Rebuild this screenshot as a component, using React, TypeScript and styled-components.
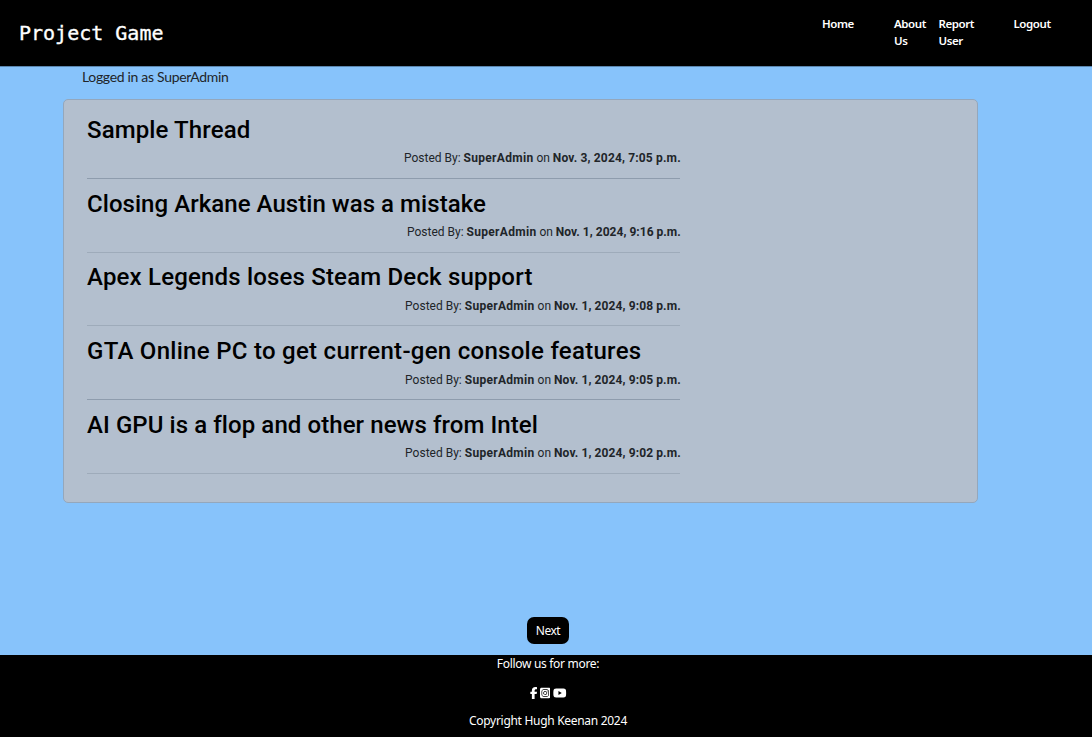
import React from "react";
import styled, { createGlobalStyle } from "styled-components";
import { FaFacebookF, FaSquareInstagram, FaYoutube } from "react-icons/fa6";

const GlobalStyle = createGlobalStyle`
  *, *::before, *::after { box-sizing: border-box; }
  body {
    margin: 0;
    background: #87c3fb;
    color: #212529;
    font-family: "Noto Sans", sans-serif;
  }
  h2, p, ul { margin: 0; padding: 0; }
`;

const Page = styled.div`
  display: flex;
  flex-direction: column;
  height: 737px;
`;

const Header = styled.header`
  display: flex;
  justify-content: space-between;
  flex: 0 0 67px;
  padding: 0 0 0 19px;
  background: #000;
  border-bottom: 1px solid #5b86ae;
  color: #fff;
`;

const Brand = styled.a`
  padding-top: 21px;
  font: 400 20px/24px "DejaVu Sans Mono", monospace;
  -webkit-text-stroke: 0.35px #fff;
  white-space: nowrap;
`;

const Nav = styled.ul`
  display: grid;
  grid-template-columns: 72px 44.5px 75px 78.5px;
  padding-top: 15px;
  list-style: none;
`;

const NavItem = styled.li`
  width: 42px;
  font: 600 11.5px/17px "Noto Sans", sans-serif;
  letter-spacing: -0.42px;
`;

const Status = styled.p`
  flex: 0 0 32px;
  padding: 0 0 0 82px;
  font: 400 14px/20px Lato, sans-serif;
  letter-spacing: -0.32px;
`;

const Card = styled.main`
  flex: 0 0 404px;
  width: 915px;
  margin-left: 63px;
  padding: 14.8px 23px 0;
  background: #b3bfce;
  border: 1px solid #94a7bc;
  border-radius: 5px;
`;

const Thread = styled.article`
  width: 593px;
  height: 73.75px;
  padding-top: 1px;
`;

const Title = styled.h2<{ $spacing: number }>`
  color: #000;
  font: 500 24px/29px Roboto, sans-serif;
  letter-spacing: ${(p) => p.$spacing}px;
  white-space: nowrap;
`;

const Meta = styled.p<{ $faint?: boolean }>`
  display: flex;
  justify-content: flex-end;
  height: 34px;
  margin-right: 0;
  padding-top: 4.6px;
  border-bottom: 1px solid ${(p) => (p.$faint ? "#9eabba" : "#8e9cad")};
  font: 400 12px/18px Roboto, sans-serif;
  white-space: nowrap;
`;

const MetaText = styled.span`
  margin-right: -0.8px;
`;

const Author = styled.b`
  letter-spacing: 0.3px;
`;

const PostDate = styled.b<{ $spacing: number }>`
  letter-spacing: ${(p) => p.$spacing}px;
`;

const Pager = styled.div`
  display: flex;
  flex: 1;
  align-items: flex-end;
  justify-content: center;
  padding: 0 0 11px 4px;
`;

const NextButton = styled.button`
  width: 42px;
  height: 27px;
  padding: 0;
  border: 0;
  border-radius: 7px;
  background: #000;
  color: #fff;
  font: 400 12px/27px "Noto Sans", sans-serif;
  letter-spacing: -0.5px;
`;

const Footer = styled.footer`
  display: flex;
  flex: 0 0 82px;
  flex-direction: column;
  align-items: center;
  padding-left: 4px;
  background: #000;
  color: #fff;
`;

const FooterText = styled.p`
  font: 400 12px/17px "Noto Sans", sans-serif;
  letter-spacing: -0.3px;
`;

const Socials = styled.div`
  display: flex;
  align-items: center;
  gap: 2.75px;
  height: 12px;
  margin: 15px 0 13px;
`;

const SocialLink = styled.a<{ $width: number }>`
  display: flex;
  width: ${(p) => p.$width}px;

  svg {
    width: 100%;
    height: 12px;
  }
`;

const threads = [
  { title: "Sample Thread", date: "Nov. 3, 2024, 7:05 p.m.", ts: 0.12, ds: 0.16 },
  { title: "Closing Arkane Austin was a mistake", date: "Nov. 1, 2024, 9:16 p.m.", ts: 0.05, ds: 0.03, faint: true },
  { title: "Apex Legends loses Steam Deck support", date: "Nov. 1, 2024, 9:08 p.m.", ts: 0.18, ds: 0.11, faint: true },
  { title: "GTA Online PC to get current-gen console features", date: "Nov. 1, 2024, 9:05 p.m.", ts: 0.28, ds: 0.11 },
  { title: "AI GPU is a flop and other news from Intel", date: "Nov. 1, 2024, 9:02 p.m.", ts: 0.08, ds: 0.11, faint: true },
];

export default function App() {
  return (
    <>
      <GlobalStyle />
      <Page>
        <Header>
          <Brand>Project Game</Brand>
          <Nav>
            <NavItem>Home</NavItem>
            <NavItem>About Us</NavItem>
            <NavItem>Report User</NavItem>
            <NavItem>Logout</NavItem>
          </Nav>
        </Header>
        <Status>Logged in as SuperAdmin</Status>
        <Card>
          {threads.map((t) => (
            <Thread key={t.title}>
              <Title $spacing={t.ts}>{t.title}</Title>
              <Meta $faint={t.faint}>
                <MetaText>
                  Posted By: <Author>SuperAdmin</Author> on <PostDate $spacing={t.ds}>{t.date}</PostDate>
                </MetaText>
              </Meta>
            </Thread>
          ))}
        </Card>
        <Pager>
          <NextButton>Next</NextButton>
        </Pager>
        <Footer>
          <FooterText>Follow us for more:</FooterText>
          <Socials>
            <SocialLink $width={7.5}><FaFacebookF /></SocialLink>
            <SocialLink $width={10.5}><FaSquareInstagram /></SocialLink>
            <SocialLink $width={13.5}><FaYoutube /></SocialLink>
          </Socials>
          <FooterText>Copyright Hugh Keenan 2024</FooterText>
        </Footer>
      </Page>
    </>
  );
}
